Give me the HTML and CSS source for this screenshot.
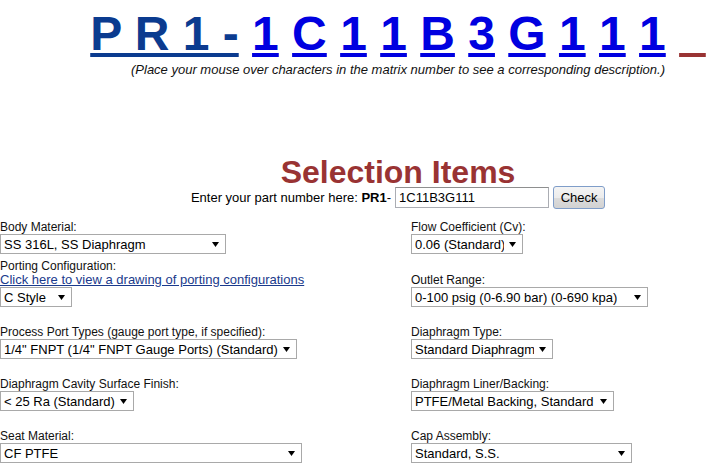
FILE: index.html
```html
<!DOCTYPE html>
<html lang="en">
<head>
    <meta charset="UTF-8">
    <title>PR1 Part Number Builder</title>
    <link rel="stylesheet" href="styles.css">
</head>
<body>
<div class="page">

    <div class="head">
        <div class="matrix"><a class="matrix-base" href="#">P R 1 -</a> <a class="matrix-char" href="#">1</a> <a class="matrix-char" href="#">C</a> <a class="matrix-char" href="#">1</a> <a class="matrix-char" href="#">1</a> <a class="matrix-char" href="#">B</a> <a class="matrix-char" href="#">3</a> <a class="matrix-char" href="#">G</a> <a class="matrix-char" href="#">1</a> <a class="matrix-char" href="#">1</a> <a class="matrix-char" href="#">1</a> <a class="matrix-char matrix-open" href="#">&nbsp;&nbsp;</a></div>
        <div class="hint">(Place your mouse over characters in the matrix number to see a corresponding description.)</div>

        <div class="section-title">Selection Items</div>
        <form class="part-form" onsubmit="return false;">
            <span class="part-label">Enter your part number here: <b>PR1</b>-</span>
            <input class="part-input" type="text" value="1C11B3G111">
            <button class="part-check" type="submit">Check</button>
        </form>
    </div>

    <div class="fields">
        <div class="field-row field-row-tight">
            <div class="field">
                <div class="field-label">Body Material:</div>
                <select class="pick pick-body"><option>SS 316L, SS Diaphragm</option></select>
            </div>
            <div class="field">
                <div class="field-label">Flow Coefficient (Cv):</div>
                <select class="pick pick-flow"><option>0.06 (Standard)</option></select>
            </div>
        </div>

        <div class="field-row">
            <div class="field">
                <div class="field-label">Porting Configuration:</div>
                <a class="field-link" href="#">Click here to view a drawing of porting configurations</a>
                <select class="pick pick-porting"><option>C Style</option></select>
            </div>
            <div class="field">
                <div class="field-label">Outlet Range:</div>
                <select class="pick pick-outlet"><option>0-100 psig (0-6.90 bar) (0-690 kpa)</option></select>
            </div>
        </div>

        <div class="field-row">
            <div class="field">
                <div class="field-label">Process Port Types (gauge port type, if specified):</div>
                <select class="pick pick-ports"><option>1/4" FNPT (1/4" FNPT Gauge Ports) (Standard)</option></select>
            </div>
            <div class="field">
                <div class="field-label">Diaphragm Type:</div>
                <select class="pick pick-diaphragm"><option>Standard Diaphragm</option></select>
            </div>
        </div>

        <div class="field-row">
            <div class="field">
                <div class="field-label">Diaphragm Cavity Surface Finish:</div>
                <select class="pick pick-finish"><option>&lt; 25 Ra (Standard)</option></select>
            </div>
            <div class="field">
                <div class="field-label">Diaphragm Liner/Backing:</div>
                <select class="pick pick-liner"><option>PTFE/Metal Backing, Standard</option></select>
            </div>
        </div>

        <div class="field-row">
            <div class="field">
                <div class="field-label">Seat Material:</div>
                <select class="pick pick-seat"><option>CF PTFE</option></select>
            </div>
            <div class="field">
                <div class="field-label">Cap Assembly:</div>
                <select class="pick pick-cap"><option>Standard, S.S.</option></select>
            </div>
        </div>
    </div>

</div>
</body>
</html>
```

FILE: styles.css
```css
body {
    margin: 0;
    font-family: "Liberation Sans", Arial, sans-serif;
    color: #000;
    background: #fff;
}
.page {
    width: 710px;
}

/* top block is centred over the matrix number */
.head {
    width: 616px;
    margin-left: 90px;
    text-align: center;
}
.matrix {
    margin-top: 6px;
    font-size: 48px;
    font-weight: bold;
    line-height: 55px;
    white-space: nowrap;
}
.matrix a {
    text-decoration: underline;
}
.matrix-base {
    color: #0b3b8f;
}
.matrix-char {
    color: #0000e0;
}
.matrix-open {
    color: #993333;
}
.hint {
    margin-top: 1px;
    font-size: 13px;
    font-style: italic;
    line-height: 15px;
    color: #111;
    white-space: nowrap;
}

/* selection heading + part number */
.section-title {
    margin-top: 82px;
    font-size: 32px;
    font-weight: bold;
    line-height: 27px;
    color: #993333;
}
.part-form {
    margin: 0;
    display: flex;
    justify-content: center;
    align-items: center;
    gap: 4px;
    font-size: 13px;
    height: 23px;
}
.part-input {
    box-sizing: border-box;
    width: 154px;
    height: 21px;
    margin: 0;
    padding: 0 3px;
    border: 1px solid #abadb3;
    border-top-color: #8e8f8f;
    font: 13px "Liberation Sans", Arial, sans-serif;
    color: #000;
}
.part-check {
    box-sizing: border-box;
    width: 52px;
    height: 23px;
    margin: 0;
    padding: 0;
    border: 1px solid #7f9dc9;
    border-radius: 3px;
    background: linear-gradient(#f4f4f4, #ececec 50%, #dcdcdc 51%, #d2d2d2);
    font: 13px "Liberation Sans", Arial, sans-serif;
    color: #000;
}

/* option fields */
.fields {
    margin-top: 11px;
}
.field-row {
    display: grid;
    grid-template-columns: 411px 1fr;
    align-items: end;
    margin-bottom: 18px;
}
.field-row-tight {
    margin-bottom: 5px;
}
.field {
    display: flex;
    flex-direction: column;
    align-items: flex-start;
}
.field-label {
    font-size: 12px;
    line-height: 14px;
    color: #111;
}
.field-link {
    font-size: 13px;
    line-height: 14px;
    color: #1a3a8c;
    text-decoration: underline;
}
.pick {
    box-sizing: border-box;
    height: 20px;
    margin: 0;
    padding: 0 18px 0 3px;
    border: 1px solid #a9a9a9;
    border-radius: 0;
    -webkit-appearance: none;
    appearance: none;
    background: #fff url("data:image/svg+xml;utf8,<svg xmlns='http://www.w3.org/2000/svg' width='7' height='5'><path d='M0 0h7L3.5 5z' fill='%23000'/></svg>") no-repeat right 6px center;
    font: 13px "Liberation Sans", Arial, sans-serif;
    color: #000;
}
.pick-body { width: 226px; }
.pick-porting { width: 72px; }
.pick-ports { width: 297px; }
.pick-finish { width: 134px; }
.pick-seat { width: 302px; }
.pick-flow { width: 112px; }
.pick-outlet { width: 237px; }
.pick-diaphragm { width: 142px; }
.pick-liner { width: 203px; }
.pick-cap { width: 221px; }
```
